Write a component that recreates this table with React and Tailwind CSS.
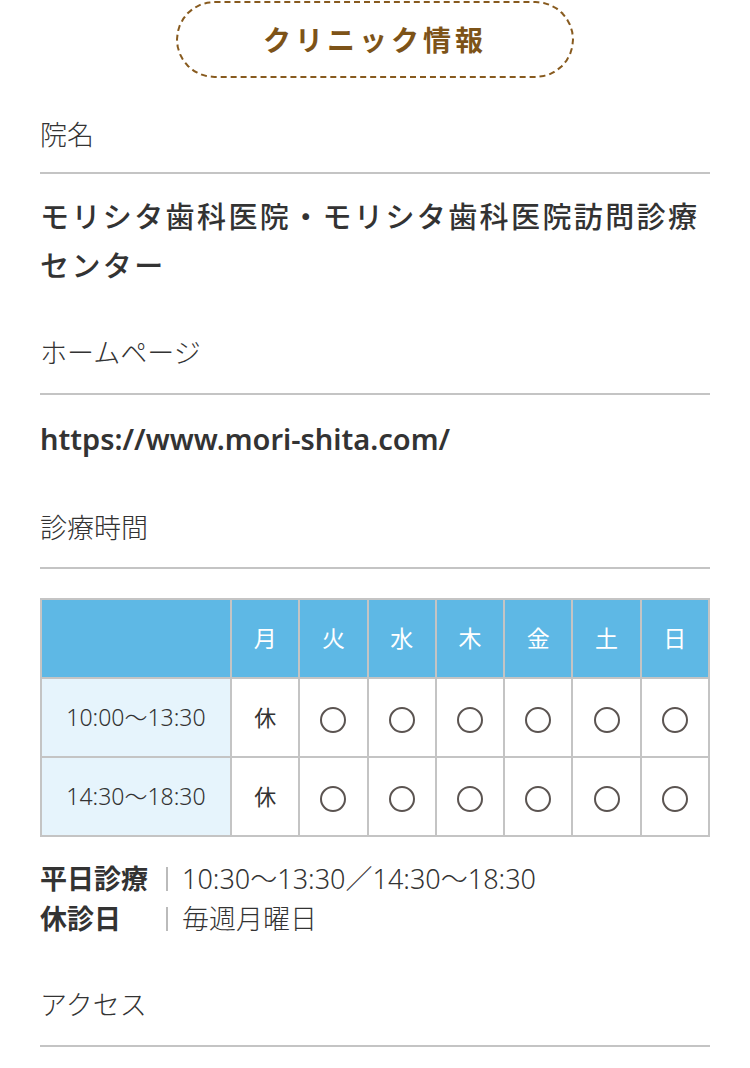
import React from 'react';

const days = ['月', '火', '水', '木', '金', '土', '日'];
const rows = [
  { time: '10:00〜13:30', marks: ['休', 'o', 'o', 'o', 'o', 'o', 'o'] },
  { time: '14:30〜18:30', marks: ['休', 'o', 'o', 'o', 'o', 'o', 'o'] },
];

const font = { fontFamily: '"Noto Sans", "Noto Sans CJK JP", sans-serif' };

const Label = ({ children, className = '' }) => (
  <div className={`border-b-2 border-[#c4c4c4] ${className}`}>
    <p className="text-[27px] leading-[40px] text-[#333] font-light">{children}</p>
  </div>
);

const Circle = () => (
  <span className="inline-block w-[26px] h-[26px] rounded-full border-[2.5px] border-[#5b5451] align-middle" />
);

export default function App() {
  return (
    <div className="w-[750px] h-[1068px] bg-white px-[40px] overflow-hidden" style={font}>
      {/* Title badge */}
      <div className="flex justify-center pt-[1px]">
        <div className="w-[398px] h-[77px] rounded-full border-2 border-dashed border-[#875a1e] flex items-center justify-center">
          <span className="text-[28px] font-bold tracking-[4px] text-[#7d5318]">クリニック情報</span>
        </div>
      </div>

      {/* 院名 */}
      <Label className="mt-[37px] pb-[17px]">院名</Label>
      <p className="mt-[18px] text-[29px] leading-[49px] font-medium tracking-[2.4px] text-[#333]">
        モリシタ歯科医院・モリシタ歯科医院訪問診療センター
      </p>

      {/* ホームページ */}
      <Label className="mt-[43px] pb-[20px]">ホームページ</Label>
      <p className="mt-[24px] text-[29px] leading-[40px] font-semibold text-[#333]">https://www.mori-shita.com/</p>

      {/* 診療時間 */}
      <Label className="mt-[49px] pb-[19px]">診療時間</Label>

      <table className="mt-[29px] w-[670px] table-fixed border-collapse text-[#333]">
        <colgroup>
          <col className="w-[190px]" />
          {days.map((d) => (
            <col key={d} />
          ))}
        </colgroup>
        <thead>
          <tr className="h-[79px] bg-[#5eb8e5]">
            <th className="border-2 border-[#c4c4c4]" />
            {days.map((d) => (
              <th key={d} className="border-2 border-[#c4c4c4] text-white text-[23px] font-normal">
                {d}
              </th>
            ))}
          </tr>
        </thead>
        <tbody>
          {rows.map((r) => (
            <tr key={r.time} className="h-[79px]">
              <td className="border-2 border-[#c4c4c4] bg-[#e6f4fc] text-center text-[23px] font-light">
                {r.time}
              </td>
              {r.marks.map((m, i) => (
                <td key={i} className="border-2 border-[#c4c4c4] text-center text-[22px]">
                  {m === 'o' ? <Circle /> : m}
                </td>
              ))}
            </tr>
          ))}
        </tbody>
      </table>

      {/* Notes */}
      <div className="mt-[22px] text-[27px] leading-[40px] text-[#333]">
        <div className="flex items-center">
          <span className="w-[112px] font-bold">平日診療</span>
          <span className="w-[2px] h-[24px] bg-[#bbb] mx-[14px]" />
          <span className="font-light">10:30〜13:30／14:30〜18:30</span>
        </div>
        <div className="flex items-center">
          <span className="w-[112px] font-bold">休診日</span>
          <span className="w-[2px] h-[24px] bg-[#bbb] mx-[14px]" />
          <span className="font-light">毎週月曜日</span>
        </div>
      </div>

      {/* アクセス */}
      <Label className="mt-[46px] pb-[20px]">アクセス</Label>
    </div>
  );
}
